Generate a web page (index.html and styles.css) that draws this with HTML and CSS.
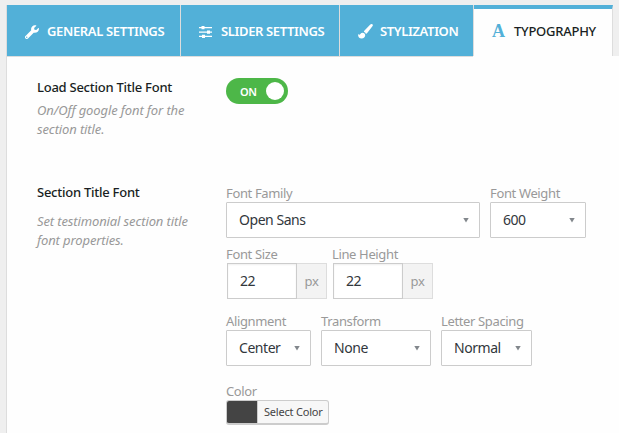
FILE: index.html
```html
<!DOCTYPE html>
<html lang="en">
<head>
<meta charset="utf-8">
<title>Typography settings</title>
<link rel="stylesheet" href="styles.css">
</head>
<body>
<nav class="tabs">
  <a class="tab general"><svg class="icon" viewBox="0 0 512 512"><path d="M507 117c-2-9-13-12-20-5l-74 74-68-11-11-68 74-75c7-6 4-18-6-20A144 144 0 0 0 228 191L19 400a64 64 0 0 0 91 91l208-209c107 29 212-61 189-165zM64 472a24 24 0 1 1 0-48 24 24 0 0 1 0 48z"/></svg><span>GENERAL SETTINGS</span></a>
  <a class="tab slider"><svg class="icon" viewBox="0 0 14 14"><path d="M0 2h2.500V1h3v1H13v1.300H5.500v1h-3v-1H0zM0 6.400h8v-1h3v1h2v1.300h-2v1H8v-1H0zM0 10.800h3v-1h3v1h7v1.300H6v1H3v-1H0z"/></svg><span>SLIDER SETTINGS</span></a>
  <a class="tab style"><svg class="icon brush" viewBox="0 0 15 15"><path d="M14.5.4c-.6-.6-1.5-.5-2.2.2L6.5 6.400c-.6.7-.7 1.200-.5 1.600.9.2 1.500.8 1.800 1.700.6.1 1.100-.2 1.600-.9l5.200-6.900c.4-.6.4-1.100-.1-1.500zM4.700 8.700c-2.300 0-2.200 2.100-3.500 2.100-.5 0-.8-.4-1.100-.7C-.2 12.700 1.100 14.500 3.600 14.500c2.200 0 3.700-1.500 3.600-3.400 0-1.400-1.100-2.400-2.500-2.400z"/></svg><span>STYLIZATION</span></a>
  <a class="tab active"><span class="letter">A</span><span>TYPOGRAPHY</span></a>
</nav>
<main class="panel">
  <section class="row load">
    <div class="about">
      <h4>Load Section Title Font</h4>
      <p>On/Off google font for the<br>section title.</p>
    </div>
    <div class="toggle"><span>ON</span><i></i></div>
  </section>
  <section class="row font">
    <div class="about">
      <h4>Section Title Font</h4>
      <p>Set testimonial section title<br>font properties.</p>
    </div>
    <div class="fields">
      <div class="line">
        <div class="field family"><label>Font Family</label><div class="select"><span>Open Sans</span><i></i></div></div>
        <div class="field weight"><label>Font Weight</label><div class="select"><span>600</span><i></i></div></div>
      </div>
      <div class="line sizes">
        <div class="field size"><label>Font Size</label><div class="group"><span class="value">22</span><span class="unit">px</span></div></div>
        <div class="field size"><label>Line Height</label><div class="group"><span class="value">22</span><span class="unit">px</span></div></div>
      </div>
      <div class="line text">
        <div class="field align"><label>Alignment</label><div class="select"><span>Center</span><i></i></div></div>
        <div class="field transform"><label>Transform</label><div class="select"><span>None</span><i></i></div></div>
        <div class="field spacing"><label>Letter Spacing</label><div class="select"><span>Normal</span><i></i></div></div>
      </div>
      <div class="field color"><label>Color</label><div class="picker"><i></i><span>Select Color</span></div></div>
    </div>
  </section>
</main>
</body>
</html>
```
FILE: styles.css
```css
* { box-sizing: border-box; }
body { margin: 0; height: 433px; overflow: hidden; background: #efefef; padding: 5px 0 0 6px; font: 13px/19px "Noto Sans", "Open Sans", sans-serif; color: #23282d; }
.tabs { display: flex; height: 51px; width: 607px; border-left: 1px solid #ddd; }
.tab { display: flex; align-items: center; height: 51px; padding: 2px 0 0 18px; background: #52b0d8; border-right: 1px solid #ddd; color: #fff; font-weight: 600; letter-spacing: -.36px; white-space: nowrap; }
.general { width: 174px; }
.slider { width: 159px; }
.style { width: 134px; }
.active { width: 139px; background: #fefefe; border-top: 4px solid #52b0d8; padding-top: 0; padding-bottom: 2px; color: #191e23; font-weight: 500; letter-spacing: -.25px; }
.icon { width: 14px; height: 14px; margin-right: 8px; fill: #fff; flex: none; }
.brush { width: 15px; height: 15px; margin-right: 7px; }
.letter { width: 22px; color: #52b0d8; font: bold 18px/19px "Liberation Serif", serif; }
.panel { height: 377px; background: #fefefe; border-left: 1px solid #ddd; position: relative; }
.panel::before { content: ""; position: absolute; left: 0; top: 0; width: 466px; height: 1px; background: #ddd; }
.row { display: flex; padding-left: 30px; }
.load { padding-top: 22px; height: 127px; }
.about { width: 189px; flex: none; }
h4 { margin: 0; font-size: 13px; line-height: 19px; font-weight: 500; letter-spacing: -.25px; color: #191e23; white-space: nowrap; }
p { margin: 4px 0 0; color: #999; font-style: italic; letter-spacing: -.12px; white-space: nowrap; }
.font p { margin-top: 10px; }
.toggle { display: flex; align-items: center; justify-content: space-between; width: 62px; height: 26px; border-radius: 13px; background: #4db748; padding: 0 4px 0 14px; color: #fff; font-size: 11px; font-weight: 600; letter-spacing: -.3px; }
.toggle i { width: 18px; height: 18px; border-radius: 50%; background: #fff; }
.line { display: flex; gap: 10px; }
label { display: block; height: 18px; line-height: 18px; color: #999; letter-spacing: -.36px; white-space: nowrap; }
.fields { padding-top: 1px; }
.select { display: flex; align-items: center; justify-content: space-between; height: 36px; border: 1px solid #ccc; border-radius: 1px; padding: 0 10px 0 12px; background: #fff; font-size: 14px; letter-spacing: -.45px; color: #32373c; }
.select span { padding-bottom: 1px; }
.select i { width: 6px; height: 5px; background: #82878c; clip-path: polygon(0 0, 100% 0, 50% 100%); }
.family { width: 254px; }
.weight { width: 96px; }
.sizes { margin-top: 7px; gap: 6px; }
.size { width: 100px; }
.sizes .size:first-child { width: 101px; }
.sizes .size + .size label { margin-left: -1px; }
.group { display: flex; width: 100px; height: 36px; }
.size:first-child .group { margin-left: 1px; }
.value { width: 70px; padding: 7px 0 0 12px; border: 1px solid #ccc; background: #fff; box-shadow: inset 0 1px 2px #0001; font-size: 14px; letter-spacing: -.45px; color: #32373c; }
.unit { width: 30px; padding-top: 8px; border: 1px solid #ddd; border-left: 0; background: #f3f3f3; color: #999; text-align: center; letter-spacing: -.3px; }
.text { margin-top: 13px; }
.align { width: 85px; }
.transform { width: 110px; }
.spacing { width: 91px; }
.color { margin-top: 16px; }
.picker { display: flex; width: 103px; height: 25px; border: 1px solid #ccc; border-bottom-width: 2px; border-radius: 3px; background: #f7f7f7; overflow: hidden; font-size: 11px; line-height: 22px; letter-spacing: -.2px; color: #444; white-space: nowrap; }
.picker i { width: 31px; background: #444; border-right: 1px solid #ccc; }
.picker span { padding-left: 6px; }
```
